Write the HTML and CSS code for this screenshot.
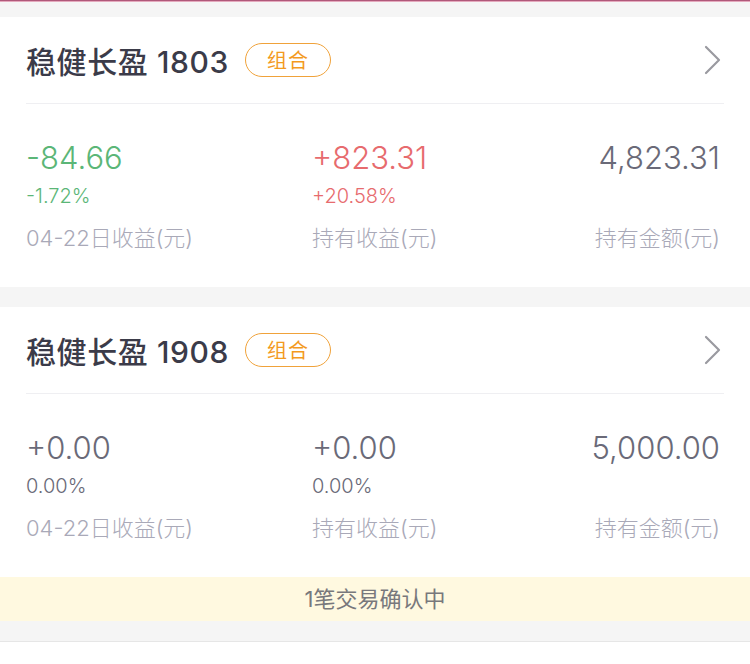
FILE: index.html
```html
<!DOCTYPE html>
<html lang="zh-CN">
<head>
<meta charset="utf-8">
<link rel="stylesheet" href="styles.css">
</head>
<body>
<div class="topline"></div>
<div class="gap gap-top"></div>
<section class="card">
  <div class="head">
    <div class="title">稳健长盈 1803</div>
    <span class="badge">组合</span>
    <svg class="chev" width="18" height="30" viewBox="0 0 18 30"><path d="M2 2 L15 15 L2 28" fill="none" stroke="#9a9aa0" stroke-width="2.2" stroke-linecap="round" stroke-linejoin="round"/></svg>
  </div>
  <div class="stats">
    <div class="col">
      <div class="num green">-84.66</div>
      <div class="pct green">-1.72%</div>
      <div class="lbl">04-22日收益(元)</div>
    </div>
    <div class="col">
      <div class="num red">+823.31</div>
      <div class="pct red">+20.58%</div>
      <div class="lbl">持有收益(元)</div>
    </div>
    <div class="col right">
      <div class="num gray">4,823.31</div>
      <div class="pct">&nbsp;</div>
      <div class="lbl">持有金额(元)</div>
    </div>
  </div>
</section>
<div class="gap"></div>
<section class="card">
  <div class="head">
    <div class="title">稳健长盈 1908</div>
    <span class="badge">组合</span>
    <svg class="chev" width="18" height="30" viewBox="0 0 18 30"><path d="M2 2 L15 15 L2 28" fill="none" stroke="#9a9aa0" stroke-width="2.2" stroke-linecap="round" stroke-linejoin="round"/></svg>
  </div>
  <div class="stats">
    <div class="col">
      <div class="num gray">+0.00</div>
      <div class="pct gray">0.00%</div>
      <div class="lbl">04-22日收益(元)</div>
    </div>
    <div class="col">
      <div class="num gray">+0.00</div>
      <div class="pct gray">0.00%</div>
      <div class="lbl">持有收益(元)</div>
    </div>
    <div class="col right">
      <div class="num gray">5,000.00</div>
      <div class="pct">&nbsp;</div>
      <div class="lbl">持有金额(元)</div>
    </div>
  </div>
</section>
<div class="banner">1笔交易确认中</div>
<div class="gap gap-bottom"></div>
</body>
</html>
```

FILE: styles.css
```css
* { box-sizing: border-box; }
html, body { margin: 0; padding: 0; background: #ffffff; }
body {
  width: 750px;
  font-family: "Inter", "Noto Sans CJK SC", sans-serif;
  color: #3a3a48;
}
.topline {
  height: 2px;
  background: linear-gradient(#b0587a 0, #b0587a 1px, #e4a9bd 1px);
}
.gap {
  height: 20px;
  background: #f5f5f5;
}
.gap-top { height: 15px; }
.gap-bottom { border-bottom: 1px solid #e6e6e6; height: 21px; }
.card {
  background: #fff;
  padding: 0 26px;
  height: 270px;
}
.head {
  height: 87px;
  border-bottom: 1px solid #efeff2;
  display: flex;
  align-items: center;
}
.title {
  font-size: 30px;
  font-weight: 500;
  color: #3b3b49;
  letter-spacing: 0.6px;
}
.badge {
  margin-left: 16px;
  height: 34px;
  width: 86px;
  border: 1.5px solid #f0a23a;
  border-radius: 17px;
  color: #f39a1e;
  font-family: "Noto Sans CJK SC", sans-serif;
  font-size: 20px;
  line-height: 31px;
  text-align: center;
  letter-spacing: 1px;
}
.chev { margin-left: auto; margin-right: 2px; }
.stats {
  display: grid;
  grid-template-columns: 286px 1fr auto;
  padding-top: 36px;
  padding-right: 4px;
}
.col.right { text-align: right; }
.num {
  font-size: 31px;
  line-height: 36px;
  font-weight: 300;
}
.pct {
  margin-top: 8px;
  font-size: 20px;
  line-height: 24px;
  font-weight: 300;
}
.lbl {
  margin-top: 16px;
  font-size: 22px;
  line-height: 28px;
  color: #a9a9b8;
  font-weight: 300;
}
.green { color: #5bb677; }
.red { color: #e76b6e; }
.gray { color: #6a6a78; }
.banner {
  height: 44px;
  background: #fff9e0;
  color: #78787c;
  font-size: 22px;
  line-height: 44px;
  text-align: center;
}
```
